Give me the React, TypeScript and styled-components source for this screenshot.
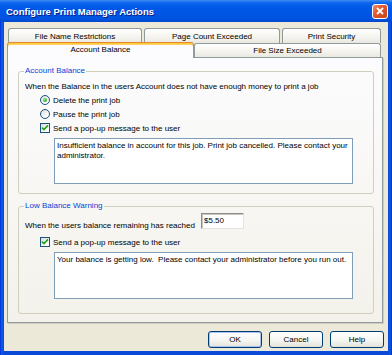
import styled, { createGlobalStyle } from 'styled-components';

const GlobalStyle = createGlobalStyle`
  html, body {
    margin: 0;
    padding: 0;
    background: #ffffff;
  }
  body {
    font-family: 'Liberation Sans', Arial, sans-serif;
    font-size: 8px;
    color: #000000;
  }
`;

const Window = styled.div`
  width: 392px;
  height: 355px;
  box-sizing: border-box;
  display: flex;
  flex-direction: column;
  background: linear-gradient(to right, #0019cf 0, #0a5ae8 1px, #0853e2 3px, #0b4ad8 4px, #0b4ad8 388px, #0852e0 389px, #0a4fdc 391px, #001ea0 392px);
`;

const TitleBar = styled.div`
  height: 22px;
  flex: none;
  display: flex;
  align-items: center;
  padding: 0 4px 0 6px;
  background: linear-gradient(to bottom, #3f8cf3 0, #0a64ec 3px, #0058e6 8px, #0055e5 14px, #0053e0 19px, #0047cc 22px);
`;

const Title = styled.span`
  color: #ffffff;
  font-weight: bold;
  font-size: 9.5px;
  padding-top: 1px;
  text-shadow: 1px 1px 0 #0a1e8a;
`;

const CloseButton = styled.div`
  margin-left: auto;
  width: 16px;
  height: 15px;
  box-sizing: border-box;
  border: 1px solid #ffffff;
  border-radius: 3px;
  background: linear-gradient(135deg, #f0916f 0%, #e2572e 40%, #c8431b 100%);
  display: flex;
  align-items: center;
  justify-content: center;
`;

const Client = styled.div`
  flex: 1;
  margin: 0 4px 4px 4px;
  background: #ece9d8;
  padding: 6px 4px 0 3px;
  display: flex;
  flex-direction: column;
`;

const TabRow = styled.div<{ $front?: boolean }>`
  display: flex;
  align-items: flex-end;
  gap: ${(p) => (p.$front ? 0 : 2)}px;
  padding-left: ${(p) => (p.$front ? 0 : 1)}px;
  margin-top: ${(p) => (p.$front ? -1 : 0)}px;
`;

const Tab = styled.div<{ $width: number; $active?: boolean; $short?: boolean }>`
  width: ${(p) => p.$width}px;
  box-sizing: border-box;
  height: ${(p) => (p.$active ? 16 : p.$short ? 14 : 15)}px;
  margin-bottom: ${(p) => (p.$active ? -1 : 0)}px;
  border: 1px solid #919b9c;
  border-bottom: none;
  border-radius: 3px 3px 0 0;
  display: flex;
  align-items: center;
  justify-content: center;
  font-size: 8px;
  white-space: nowrap;
  position: relative;
  z-index: ${(p) => (p.$active ? 1 : 0)};
  background: ${(p) => (p.$active ? '#fcfcfe' : 'linear-gradient(to bottom, #ffffff 0%, #f4f3ee 60%, #e8e7e0 100%)')};
  border-top-color: ${(p) => (p.$active ? '#e68b2c' : '#919b9c')};
  box-shadow: ${(p) => (p.$active ? 'inset 0 1px 0 #ffc73c, inset 0 2px 0 #ffd36a' : 'none')};
  padding-bottom: ${(p) => (p.$active ? 3 : 0)}px;
`;

const Panel = styled.div`
  width: 376px;
  height: 266px;
  box-sizing: border-box;
  border: 1px solid #919b9c;
  box-shadow: 1px 1px 0 #d0cec2;
  background: linear-gradient(to bottom, #fcfcfe 0%, #f7f6f2 60%, #f3f1ea 100%);
  padding: 8px 8px 0 10px;
  display: flex;
  flex-direction: column;
`;

const GroupBox = styled.fieldset<{ $bottom: number; $gap?: number }>`
  margin: ${(p) => p.$gap || 0}px 0 0 0;
  padding: 0 19px ${(p) => p.$bottom}px 6px;
  border: 1px solid #d0d0bf;
  border-radius: 3px;
  min-width: 0;
  display: flex;
  flex-direction: column;
`;

const Legend = styled.legend`
  color: #0046d5;
  font-size: 8px;
  line-height: 10px;
  padding: 0 1px;
  margin-left: -1px;
`;

const Row = styled.div<{ $indent?: number; $top?: number }>`
  height: 14px;
  display: flex;
  align-items: center;
  gap: 3px;
  margin-left: ${(p) => p.$indent || 0}px;
  margin-top: ${(p) => p.$top || 0}px;
  white-space: nowrap;
`;

const RadioCircle = styled.span<{ $on?: boolean }>`
  width: 10px;
  height: 10px;
  box-sizing: border-box;
  border-radius: 50%;
  border: 1px solid #1c5180;
  background: linear-gradient(135deg, #dcdcd7 0%, #ffffff 80%);
  display: flex;
  align-items: center;
  justify-content: center;
  &::after {
    content: '';
    display: ${(p) => (p.$on ? 'block' : 'none')};
    width: 4px;
    height: 4px;
    border-radius: 50%;
    background: radial-gradient(circle at 35% 35%, #8ff08f 0%, #2fb72f 60%, #1b8a1b 100%);
  }
`;

const CheckBox = styled.span`
  width: 10px;
  height: 10px;
  box-sizing: border-box;
  border: 1px solid #1c5180;
  background: linear-gradient(135deg, #dcdcd7 0%, #ffffff 80%);
  display: flex;
  align-items: center;
  justify-content: center;
`;

const MessageBox = styled.div<{ $height: number }>`
  width: 299px;
  height: ${(p) => p.$height}px;
  box-sizing: border-box;
  margin: 3px 0 0 29px;
  border: 1px solid #7f9db9;
  background: #ffffff;
  padding: 2px 2px;
  line-height: 10px;
  white-space: pre-wrap;
`;

const AmountRow = styled.div`
  display: flex;
  align-items: flex-start;
  margin-top: 2px;
`;

const AmountLabel = styled.span`
  width: 176px;
  padding-top: 8px;
  line-height: 10px;
  white-space: nowrap;
`;

const AmountInput = styled.div`
  width: 43px;
  height: 16px;
  box-sizing: border-box;
  border: 1px solid;
  border-color: #8c8c8c #e4e3dc #e4e3dc #8c8c8c;
  box-shadow: inset 1px 1px 0 #c7c6be;
  background: #ffffff;
  padding: 2px 0 0 2px;
  line-height: 10px;
`;

const ButtonRow = styled.div`
  display: flex;
  justify-content: flex-end;
  gap: 7px;
  margin-top: 8px;
`;

const Button = styled.div<{ $default?: boolean }>`
  width: 54px;
  height: 17px;
  box-sizing: border-box;
  border: 1px solid #003c74;
  border-radius: 3px;
  background: linear-gradient(to bottom, #ffffff 0%, #f4f4f0 60%, #e3e2da 100%);
  box-shadow: ${(p) => (p.$default ? 'inset 0 0 0 1px #a9c4f2' : 'none')};
  display: flex;
  align-items: center;
  justify-content: center;
  font-size: 8px;
`;

const Check = () => (
  <svg width="8" height="8" viewBox="0 0 8 8">
    <path d="M1 3.6 L3 5.6 L7 1.4" fill="none" stroke="#21a121" strokeWidth="1.6" />
  </svg>
);

const CloseX = () => (
  <svg width="8" height="8" viewBox="0 0 8 8">
    <path d="M1 1 L7 7 M7 1 L1 7" stroke="#ffffff" strokeWidth="1.8" />
  </svg>
);

const App = () => (
  <>
    <GlobalStyle />
    <Window>
      <TitleBar>
        <Title>Configure Print Manager Actions</Title>
        <CloseButton>
          <CloseX />
        </CloseButton>
      </TitleBar>
      <Client>
        <TabRow>
          <Tab $width={134}>File Name Restrictions</Tab>
          <Tab $width={136}>Page Count Exceeded</Tab>
          <Tab $width={99}>Print Security</Tab>
        </TabRow>
        <TabRow $front>
          <Tab $width={187} $active>
            Account Balance
          </Tab>
          <Tab $width={187} $short>
            File Size Exceeded
          </Tab>
        </TabRow>
        <Panel>
          <GroupBox $bottom={9}>
            <Legend>Account Balance</Legend>
            <Row $top={3}>When the Balance in the users Account does not have enough money to print a job</Row>
            <Row $indent={15}>
              <RadioCircle $on />
              Delete the print job
            </Row>
            <Row $indent={15}>
              <RadioCircle />
              Pause the print job
            </Row>
            <Row $indent={15}>
              <CheckBox>
                <Check />
              </CheckBox>
              Send a pop-up message to the user
            </Row>
            <MessageBox $height={46}>
              Insufficient balance in account for this job. Print job cancelled. Please contact your administrator.
            </MessageBox>
          </GroupBox>
          <GroupBox $bottom={14} $gap={7}>
            <Legend>Low Balance Warning</Legend>
            <AmountRow>
              <AmountLabel>When the users balance remaining has reached</AmountLabel>
              <AmountInput>$5.50</AmountInput>
            </AmountRow>
            <Row $indent={15} $top={4}>
              <CheckBox>
                <Check />
              </CheckBox>
              Send a pop-up message to the user
            </Row>
            <MessageBox $height={47}>
              {'Your balance is getting low.  Please contact your administrator before you run out.'}
            </MessageBox>
          </GroupBox>
        </Panel>
        <ButtonRow>
          <Button $default>OK</Button>
          <Button>Cancel</Button>
          <Button>Help</Button>
        </ButtonRow>
      </Client>
    </Window>
  </>
);

export default App;
